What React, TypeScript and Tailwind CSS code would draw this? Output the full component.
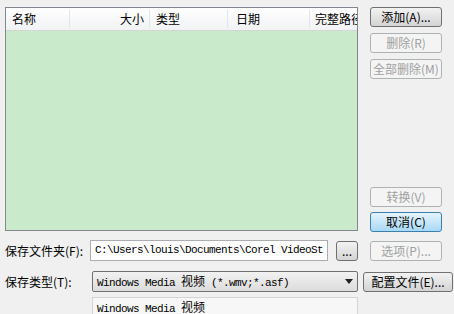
import React from "react";

const cjk = '"Noto Sans CJK SC", "Liberation Sans", sans-serif';
const mono = '"Liberation Mono", "Noto Sans CJK SC", monospace';

function Btn({
  children,
  disabled,
  primary,
  className = "",
}: {
  children: React.ReactNode;
  disabled?: boolean;
  primary?: boolean;
  className?: string;
}) {
  const look = primary
    ? "border-[#3c7fb1] bg-gradient-to-b from-[#e5f4fc] to-[#a7d9f5] text-black"
    : disabled
    ? "border-[#adb2b5] bg-[#f4f4f4] text-[#a0a0a0]"
    : "border-[#707070] bg-gradient-to-b from-[#f2f2f2] to-[#d4d4d4] text-black";
  return (
    <div
      className={`flex h-[20px] items-center justify-center rounded-[3px] border text-[12px] leading-none ${look} ${className}`}
      style={{ fontFamily: cjk }}
    >
      {children}
    </div>
  );
}

export default function App() {
  return (
    <div
      className="relative h-[314px] w-[454px] overflow-hidden bg-[#f0f0f0] text-black"
      style={{ fontFamily: cjk }}
    >
      <div className="flex gap-[12px] pl-[5px] pt-[7px]">
        {/* List */}
        <div className="flex h-[224px] w-[353px] flex-col border border-[#828790] bg-[#c9ebcb]">
          <div className="flex h-[23px] items-center border-b border-[#d5d5d5] bg-gradient-to-b from-white to-[#f1f2f4] text-[12px]">
            <div className="w-[64px] border-r border-[#e3e5e8] pl-[6px]">名称</div>
            <div className="w-[80px] border-r border-[#e3e5e8] pr-[5px] text-right">大小</div>
            <div className="w-[78px] border-r border-[#e3e5e8] pl-[6px]">类型</div>
            <div className="w-[82px] border-r border-[#e3e5e8] pl-[8px]">日期</div>
            <div className="flex-1 overflow-hidden whitespace-nowrap pl-[5px]">完整路径</div>
          </div>
        </div>

        {/* Right buttons */}
        <div className="flex w-[72px] flex-col">
          <Btn>添加(A)...</Btn>
          <Btn disabled className="mt-[6px]">删除(R)</Btn>
          <Btn disabled className="mt-[6px]">全部删除(M)</Btn>
          <Btn disabled className="mt-[108px]">转换(V)</Btn>
          <Btn primary className="mt-[5px]">取消(C)</Btn>
        </div>
      </div>

      {/* Save folder */}
      <div className="mt-[8px] flex items-center pl-[5px]">
        <div className="w-[85px] text-[12px]">保存文件夹(F):</div>
        <div
          className="flex h-[21px] w-[238px] items-center overflow-hidden whitespace-nowrap border border-[#abadb3] bg-white pl-[4px] text-[11px] tracking-[-0.6px]"
          style={{ fontFamily: mono }}
        >
          C:\Users\louis\Documents\Corel VideoSt
        </div>
        <Btn className="ml-[8px] h-[19px] w-[22px]">...</Btn>
        <Btn disabled className="ml-[12px] w-[72px]">选项(P)...</Btn>
      </div>

      {/* Save type */}
      <div className="mt-[10px] flex items-center pl-[5px]">
        <div className="w-[87px] text-[12px]">保存类型(T):</div>
        <div className="flex h-[21px] w-[266px] items-center justify-between rounded-[2px] border border-[#707070] bg-gradient-to-b from-[#f2f2f2] to-[#dcdcdc] pl-[4px] pr-[4px]">
          <span className="whitespace-nowrap text-[11px] tracking-[-0.6px]" style={{ fontFamily: mono }}>
            Windows Media <span className="text-[12px] tracking-normal" style={{ fontFamily: cjk }}>视频</span> (*.wmv;*.asf)
          </span>
          <svg width="8" height="5" viewBox="0 0 8 5">
            <path d="M0 0h8L4 5z" fill="#222" />
          </svg>
        </div>
        <Btn className="ml-[5px] w-[90px]">配置文件(E)...</Btn>
      </div>

      {/* Description */}
      <div className="ml-[92px] mt-[5px] h-[40px] w-[266px] border border-[#d5d5d5] bg-[#f7f7f7] pl-[4px] pt-[2px] leading-[13px]">
        <div className="whitespace-nowrap text-[11px] tracking-[-0.6px]" style={{ fontFamily: mono }}>
          Windows Media <span className="text-[12px] tracking-normal" style={{ fontFamily: cjk }}>视频</span>
        </div>
        <div className="whitespace-nowrap text-[11px] tracking-[-0.6px]" style={{ fontFamily: mono }}>
          24 位, 320 x 240, 30 fps
        </div>
      </div>
    </div>
  );
}
